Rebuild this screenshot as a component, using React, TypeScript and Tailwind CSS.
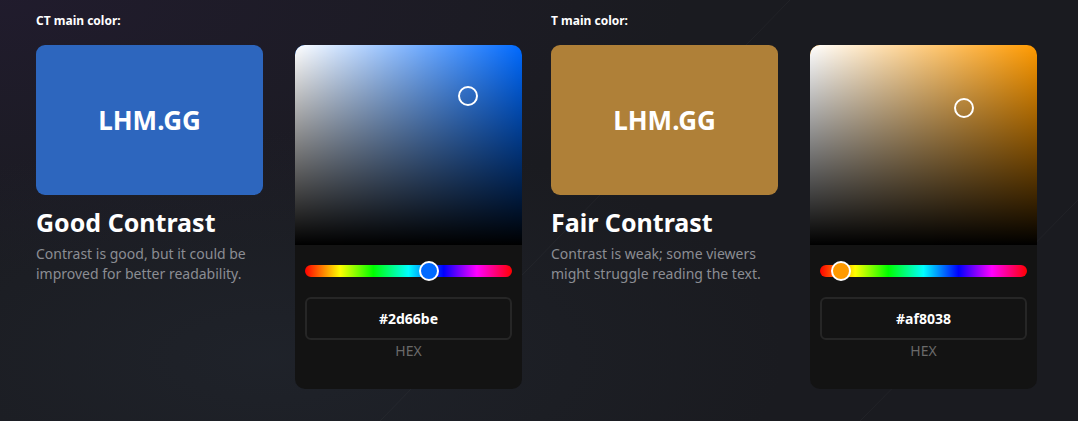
import React from "react";

type Group = {
  label: string;
  hex: string;
  hueColor: string;
  huePct: number;
  sat: number;
  val: number;
  title: string;
  desc: string;
};

const groups: Group[] = [
  {
    label: "CT main color:",
    hex: "#2d66be",
    hueColor: "#006aff",
    huePct: 59.9,
    sat: 76.3,
    val: 74.5,
    title: "Good Contrast",
    desc: "Contrast is good, but it could be improved for better readability.",
  },
  {
    label: "T main color:",
    hex: "#af8038",
    hueColor: "#ff9a00",
    huePct: 10.1,
    sat: 68,
    val: 68.6,
    title: "Fair Contrast",
    desc: "Contrast is weak; some viewers might struggle reading the text.",
  },
];

function Picker({ g }: { g: Group }) {
  return (
    <div className="w-[227px] h-[344px] rounded-[10px] bg-[#131313] flex flex-col overflow-hidden">
      <div
        className="relative h-[200px] w-full"
        style={{ backgroundColor: g.hueColor }}
      >
        <div className="absolute inset-0 bg-[linear-gradient(to_right,#fff,rgba(255,255,255,0))]" />
        <div className="absolute inset-0 bg-[linear-gradient(to_top,#000,rgba(0,0,0,0))]" />
        <div
          className="absolute w-[20px] h-[20px] rounded-full border-2 border-white -translate-x-1/2 -translate-y-1/2"
          style={{ left: `${g.sat}%`, top: `${100 - g.val}%` }}
        />
      </div>
      <div className="flex flex-col px-[10px] pt-[20px]">
        <div className="relative h-[12px] rounded-full bg-[linear-gradient(to_right,#f00_0%,#ff0_17%,#0f0_33%,#0ff_50%,#00f_67%,#f0f_83%,#f00_100%)]">
          <div
            className="absolute top-1/2 w-[20px] h-[20px] rounded-full border-2 border-white -translate-x-1/2 -translate-y-1/2"
            style={{ left: `${g.huePct}%`, backgroundColor: g.hueColor }}
          />
        </div>
        <div className="mt-[20px] h-[43px] rounded-[6px] border-2 border-[#262626] flex items-center justify-center text-white font-bold text-[14px]">
          {g.hex}
        </div>
        <div className="mt-[1px] text-center text-[14px] text-[#6a6a6a] leading-[20px]">HEX</div>
      </div>
    </div>
  );
}

function GroupView({ g }: { g: Group }) {
  return (
    <div className="flex flex-col">
      <div className="text-[12px] font-bold text-white leading-[14px] h-[14px] mt-[14px]">{g.label}</div>
      <div className="flex gap-[32px] mt-[17px]">
        <div className="w-[227px] flex flex-col">
          <div
            className="h-[150px] rounded-[9px] flex items-center justify-center text-white font-bold text-[26px]"
            style={{ backgroundColor: g.hex }}
          >
            LHM.GG
          </div>
          <div className="mt-[11px] text-white font-bold text-[25px] leading-[32px]">{g.title}</div>
          <div className="mt-[6px] text-[14px] leading-[20px] text-[#8b8d93]">{g.desc}</div>
        </div>
        <Picker g={g} />
      </div>
    </div>
  );
}

export default function App() {
  return (
    <div
      className="relative w-[1078px] h-[421px] overflow-hidden bg-[#1a1b20]"
      style={{ fontFamily: '"Noto Sans", "Open Sans", sans-serif' }}
    >
      <div className="absolute inset-0 bg-[radial-gradient(ellipse_at_0%_0%,rgba(40,28,60,0.45),rgba(0,0,0,0)_45%)]" />
      <div className="absolute inset-0 bg-[radial-gradient(ellipse_at_25%_85%,rgba(40,48,60,0.35),rgba(0,0,0,0)_45%)]" />
      <svg className="absolute inset-0" width="1078" height="421">
        <line x1="790" y1="0" x2="380" y2="421" stroke="rgba(255,255,255,0.035)" strokeWidth="1" />
        <line x1="1078" y1="200" x2="860" y2="421" stroke="rgba(255,255,255,0.035)" strokeWidth="1" />
      </svg>
      <div className="relative flex gap-[29px] pl-[36px]">
        {groups.map((g) => (
          <GroupView key={g.label} g={g} />
        ))}
      </div>
    </div>
  );
}
